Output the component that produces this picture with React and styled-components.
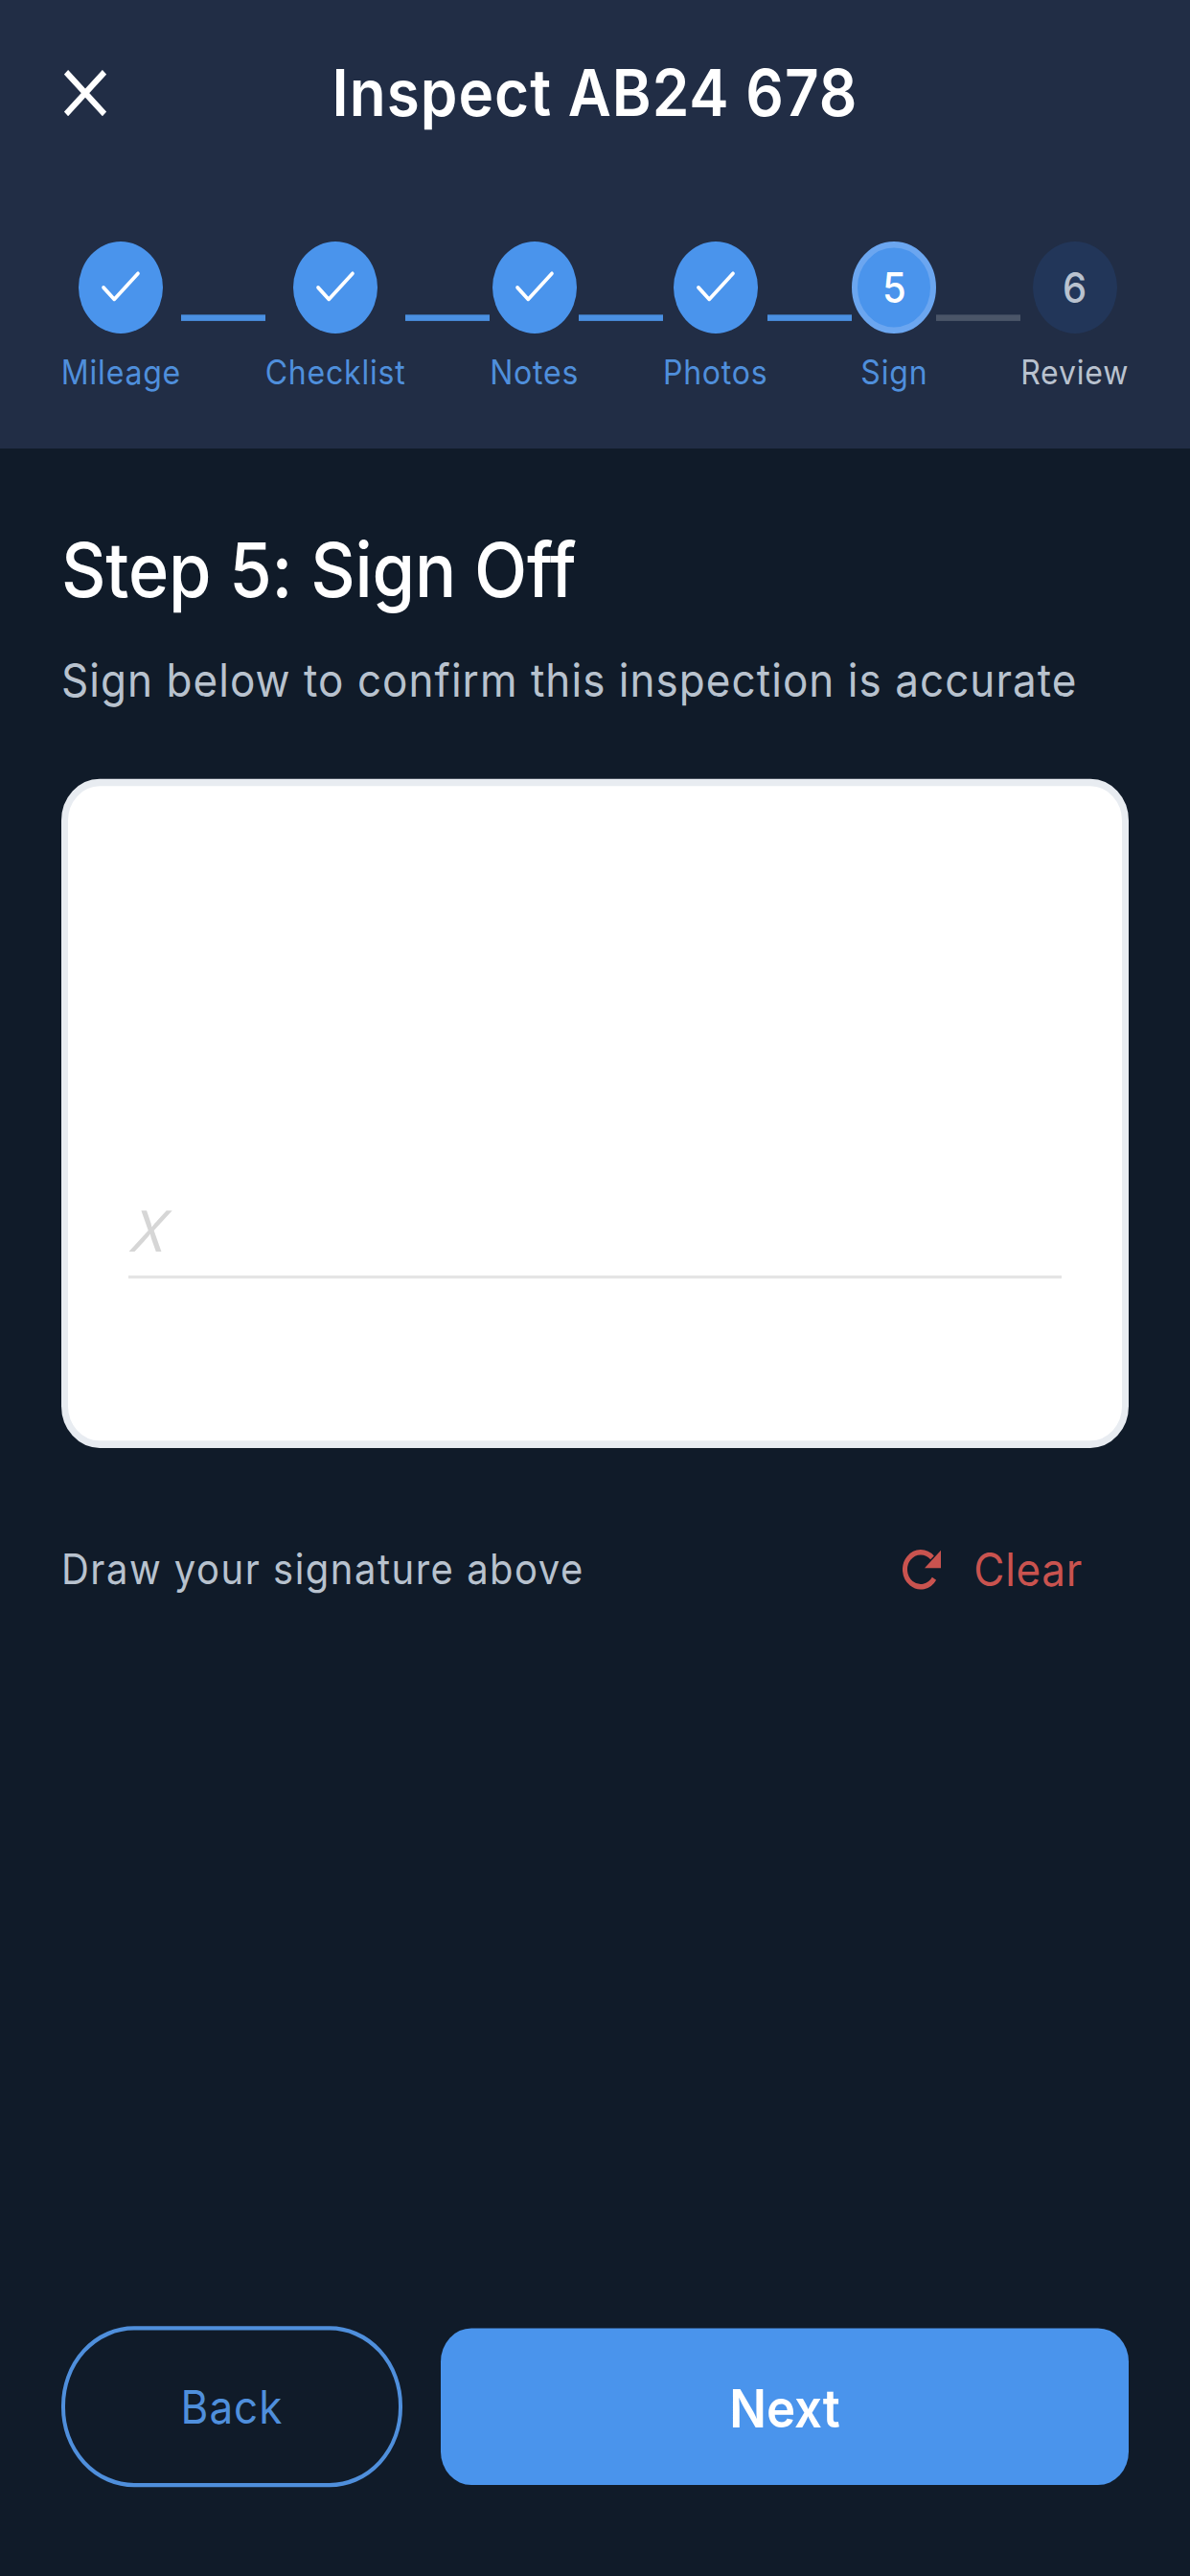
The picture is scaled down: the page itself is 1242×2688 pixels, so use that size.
import React from 'react';
import styled, { createGlobalStyle } from 'styled-components';
import { Check } from 'lucide-react';

const GlobalStyle = createGlobalStyle`
  html, body {
    margin: 0;
    padding: 0;
    background: #101b29;
  }
  * {
    box-sizing: border-box;
  }
`;

const Page = styled.div`
  width: 1242px;
  height: 2688px;
  overflow: hidden;
`;

// the whole capture is stretched a bit vertically, circles come out as ellipses
const Screen = styled.div`
  width: 1242px;
  height: 2464px;
  transform: scaleY(1.0909);
  transform-origin: top left;
  display: flex;
  flex-direction: column;
  background: #101b29;
  font-family: Inter, 'Noto Sans', sans-serif;
`;

const Header = styled.header`
  height: 429px;
  flex-shrink: 0;
  background: #212d45;
  padding: 55px 64px 0;
`;

const TopRow = styled.div`
  display: grid;
  grid-template-columns: 1fr auto 1fr;
  align-items: center;
  height: 68px;
  margin-bottom: 108px;
`;

const CloseIcon = styled.svg`
  display: block;
  width: 44px;
  height: 44px;
  margin-left: 3px;
`;

const Title = styled.h1`
  margin: 0;
  font-size: 62px;
  line-height: 68px;
  font-weight: 600;
  letter-spacing: 1px;
  color: #ffffff;
`;

const Stepper = styled.div`
  display: flex;
  align-items: flex-start;
`;

const Step = styled.div`
  display: flex;
  flex-direction: column;
  align-items: center;
  min-width: 88px;
`;

const Circle = styled.div`
  width: 88px;
  height: 88px;
  border-radius: 50%;
  display: flex;
  align-items: center;
  justify-content: center;
  font-size: 40px;
  font-weight: 500;
  background: ${(p) => (p.$pending ? '#223659' : '#4a94ec')};
  color: ${(p) => (p.$pending ? '#b9c2cf' : '#ffffff')};
  border: ${(p) => (p.$current ? '6px solid #6ba6f0' : 'none')};
`;

const StepLabel = styled.div`
  margin-top: 18px;
  font-size: 32px;
  line-height: 40px;
  letter-spacing: 0.8px;
  white-space: nowrap;
  color: ${(p) => (p.$pending ? '#b9c2cf' : '#4f8fdc')};
`;

const Connector = styled.div`
  width: 88px;
  height: 6px;
  flex-shrink: 0;
  margin-top: 70px;
  background: ${(p) => (p.$done ? '#4a90e2' : '#4a5568')};
`;

const Body = styled.main`
  flex: 1;
  padding: 73px 64px 0;
  display: flex;
  flex-direction: column;
`;

const Heading = styled.h2`
  margin: 0;
  font-size: 72px;
  line-height: 86px;
  font-weight: 500;
  letter-spacing: -0.2px;
  color: #ffffff;
`;

const Subtitle = styled.p`
  margin: 34px 0 0;
  font-size: 44px;
  line-height: 56px;
  letter-spacing: 1.05px;
  color: #b8c2ce;
`;

const SignaturePad = styled.div`
  margin-top: 67px;
  height: 640px;
  background: #ffffff;
  border: 7px solid #e8ecf1;
  border-radius: 40px;
  padding: 0 63px;
  display: flex;
  flex-direction: column;
  justify-content: flex-end;
`;

const SignMark = styled.div`
  font-size: 54px;
  line-height: 60px;
  font-style: italic;
  color: #d6d6d6;
  transform: skewX(-8deg);
  transform-origin: bottom left;
`;

const SignLine = styled.div`
  height: 3px;
  margin: 12px 0 155px;
  background: #e5e5e5;
`;

const PadFooter = styled.div`
  margin-top: 90px;
  display: flex;
  align-items: center;
  justify-content: space-between;
  padding-right: 48px;
`;

const Hint = styled.span`
  font-size: 40px;
  line-height: 52px;
  letter-spacing: 1.5px;
  color: #b8c2ce;
`;

const ClearButton = styled.div`
  display: flex;
  align-items: center;
  gap: 34px;
  font-size: 44px;
  line-height: 52px;
  letter-spacing: 0.7px;
  color: #c9534f;
`;

const ClearIcon = styled.svg`
  display: block;
  width: 40px;
  height: 40px;
`;

const Footer = styled.footer`
  flex-shrink: 0;
  display: flex;
  align-items: center;
  gap: 40px;
  padding: 0 64px 85px;
`;

const BackButton = styled.button`
  flex: 0 0 356px;
  height: 154px;
  padding: 0;
  border: 4px solid #4f8fdc;
  border-radius: 76px;
  background: transparent;
  font-family: inherit;
  font-size: 44px;
  font-weight: 400;
  letter-spacing: 1px;
  color: #4f8fdc;
`;

const NextButton = styled.button`
  flex: 1;
  height: 150px;
  padding: 3px 0 0;
  border: none;
  border-radius: 32px;
  background: #4a94ec;
  font-family: inherit;
  font-size: 51px;
  font-weight: 600;
  color: #ffffff;
`;

const steps = [
  { label: 'Mileage', state: 'done' },
  { label: 'Checklist', state: 'done' },
  { label: 'Notes', state: 'done' },
  { label: 'Photos', state: 'done' },
  { label: 'Sign', state: 'current', num: 5 },
  { label: 'Review', state: 'pending', num: 6 },
];

const App = () => (
  <>
    <GlobalStyle />
    <Page>
      <Screen>
        <Header>
          <TopRow>
            <CloseIcon viewBox="0 0 44 44">
              <path d="M2 2 L42 42 M42 2 L2 42" stroke="#ffffff" strokeWidth="6" fill="none" />
            </CloseIcon>
            <Title>Inspect AB24 678</Title>
          </TopRow>
          <Stepper>
            {steps.map((s, i) => (
              <React.Fragment key={s.label}>
                <Step>
                  <Circle $pending={s.state === 'pending'} $current={s.state === 'current'}>
                    {s.state === 'done' ? <Check size={54} strokeWidth={1.6} color="#ffffff" /> : s.num}
                  </Circle>
                  <StepLabel $pending={s.state === 'pending'}>{s.label}</StepLabel>
                </Step>
                {i < steps.length - 1 && <Connector $done={s.state === 'done'} />}
              </React.Fragment>
            ))}
          </Stepper>
        </Header>
        <Body>
          <Heading>Step 5: Sign Off</Heading>
          <Subtitle>Sign below to confirm this inspection is accurate</Subtitle>
          <SignaturePad>
            <SignMark>X</SignMark>
            <SignLine />
          </SignaturePad>
          <PadFooter>
            <Hint>Draw your signature above</Hint>
            <ClearButton>
              <ClearIcon viewBox="0 0 40 40">
                <path d="M31 9 A16.5 16.5 0 1 0 33 29" stroke="currentColor" strokeWidth="5" fill="none" />
                <path d="M40 2 L40 19 L23 19 Z" fill="currentColor" />
              </ClearIcon>
              Clear
            </ClearButton>
          </PadFooter>
        </Body>
        <Footer>
          <BackButton>Back</BackButton>
          <NextButton>Next</NextButton>
        </Footer>
      </Screen>
    </Page>
  </>
);

export default App;
